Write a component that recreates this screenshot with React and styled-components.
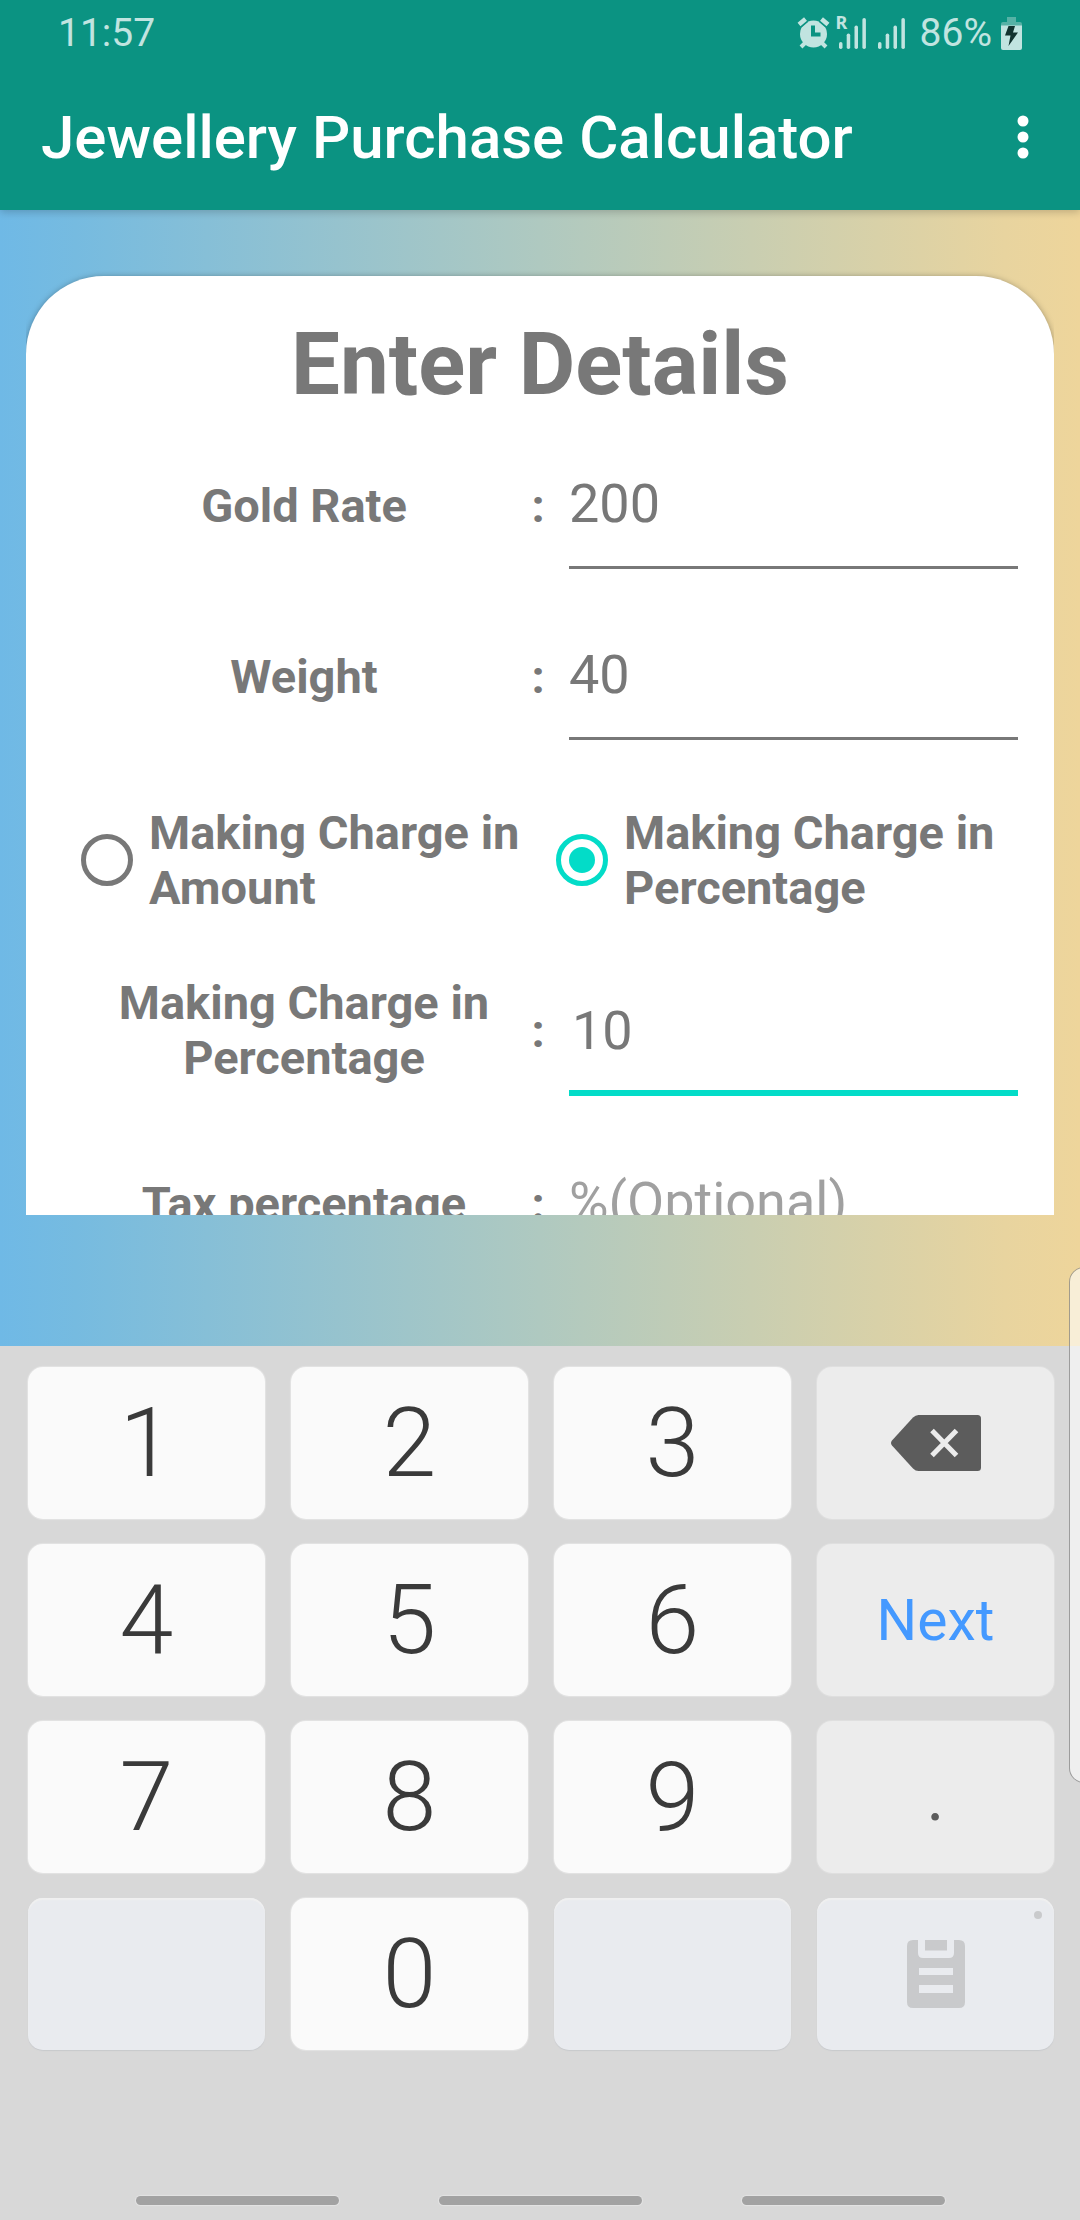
import React, { useState } from "react";
import styled, { createGlobalStyle, css } from "styled-components";

const ink = "#787878";
const teal = "#0b9382";
const accent = "#03dcc8";
const statusInk = "#c1e4e0";

const GlobalStyle = createGlobalStyle`
  *, *::before, *::after { box-sizing: border-box; }
  html, body { margin: 0; padding: 0; }
  body { font-family: Roboto, "Noto Sans", sans-serif; color: ${ink}; }
  button, input { font-family: inherit; margin: 0; }
`;

const Screen = styled.div`
  position: relative;
  display: flex;
  flex-direction: column;
  height: 100vh;
  overflow: hidden;
`;

const Header = styled.header`
  position: relative;
  z-index: 1;
  flex: none;
  background: ${teal};
  box-shadow: 0 2px 8px rgba(0, 0, 0, 0.2);
`;

const StatusBar = styled.div`
  display: flex;
  align-items: center;
  justify-content: space-between;
  height: 66px;
  padding: 0 58px;
  color: ${statusInk};
  font-size: 39px;
  line-height: 48px;
`;

const StatusGroup = styled.div`
  display: flex;
  align-items: center;
  gap: 9px;
`;

const Signals = styled.div`
  position: relative;
  display: flex;
  gap: 12px;
  margin-right: 6px;
`;

const Roaming = styled.span`
  position: absolute;
  left: -3px;
  top: -8px;
  font: 700 18px/24px "Noto Sans", sans-serif;
`;

const Toolbar = styled.div`
  display: flex;
  align-items: center;
  justify-content: space-between;
  height: 144px;
  padding: 0 41px;
`;

const AppTitle = styled.h1`
  margin: 0;
  color: #fff;
  font-size: 60px;
  font-weight: 500;
  line-height: 70px;
`;

const MenuButton = styled.button`
  display: flex;
  padding: 0;
  border: 0;
  background: none;
  color: #fff;
`;

const Main = styled.main`
  flex: 1;
  min-height: 0;
  display: flex;
  padding: 0 26px 131px;
  background: linear-gradient(90deg, #6fb9e6 0%, #76bbe0 7%, #afc9c0 50%, #e8d49f 93%, #eed59b 100%);
`;

const Scroller = styled.div`
  flex: 1;
  padding-top: 66px;
  overflow: hidden auto;
  scrollbar-width: none;
`;

const Card = styled.form`
  padding: 37px 0 60px;
  border-radius: 78px;
  background: #fff;
  box-shadow: 0 1px 6px rgba(0, 0, 0, 0.35);
`;

const Heading = styled.h2`
  margin: 0 0 22px;
  font-size: 87px;
  font-weight: 700;
  line-height: 102px;
  text-align: center;
`;

const Fields = styled.div`
  display: flex;
  flex-direction: column;
  gap: 39px;
`;

const FieldRow = styled.div`
  display: grid;
  grid-template-columns: 406fr 62px 449fr;
  align-items: ${(p) => (p.$wraps ? "center" : "baseline")};
  padding: 0 36px 0 75px;
`;

const labelText = css`
  font-size: 47px;
  font-weight: 700;
  line-height: 55px;
`;

const FieldLabel = styled.label`
  ${labelText}
  text-align: center;
`;

const Colon = styled.span`
  ${labelText}
  text-align: center;
`;

const FieldInput = styled.input`
  width: 100%;
  min-width: 0;
  height: 132px;
  padding: ${(p) => (p.$active ? "34px 3px 28px" : "34px 0 31px")};
  border: 0;
  border-bottom: ${(p) => (p.$active ? `6px solid ${accent}` : `3px solid ${ink}`)};
  border-radius: 0;
  outline: 0;
  background: none;
  color: ${ink};
  font-size: 54px;
  line-height: 64px;
  &::placeholder { color: #a0a0a0; opacity: 1; }
`;

const RadioRow = styled.div`
  display: grid;
  grid-template-columns: 1fr 1fr;
  padding: 26px 23px 10px 55px;
`;

const RadioLabel = styled.label`
  ${labelText}
  display: flex;
  align-items: center;
  gap: 16px;
`;

const Radio = styled.input`
  appearance: none;
  flex: none;
  display: grid;
  place-content: center;
  width: 52px;
  height: 52px;
  border: 5px solid ${ink};
  border-radius: 50%;
  &:checked { border-color: ${accent}; }
  &:checked::before {
    content: "";
    width: 26px;
    height: 26px;
    border-radius: 50%;
    background: ${accent};
  }
`;

const Keyboard = styled.section`
  flex: none;
  padding-top: 21px;
  background: #d8d8d8;
`;

const Keys = styled.div`
  display: grid;
  grid-template-columns: repeat(4, 1fr);
  grid-auto-rows: 152px;
  gap: 25px 26px;
  padding: 0 26px 0 28px;
`;

const keyTones = {
  digit: css`
    background: #fafafa;
    color: #3a3a3a;
    font-size: 97px;
    font-weight: 300;
    box-shadow: 0 0 1px 1px rgba(255, 255, 255, 0.3);
  `,
  action: css`
    background: #ececec;
    color: #5c5c5c;
    font-size: 68px;
    box-shadow: 0 0 1px 1px rgba(255, 255, 255, 0.2);
  `,
  next: css`
    background: #ececec;
    color: #4499ff;
    font-size: 57px;
    box-shadow: 0 0 1px 1px rgba(255, 255, 255, 0.2);
  `,
  muted: css`
    background: #e9ebef;
    color: #c9cacc;
    box-shadow: inset 0 2px 1px #f0f0f0, 0 1px 1px #c8cacd;
  `,
};

const Key = styled.button`
  position: relative;
  display: flex;
  align-items: center;
  justify-content: center;
  padding: 0;
  border: 0;
  border-radius: 15px;
  line-height: normal;
  font-weight: 400;
  ${(p) => keyTones[p.$tone]}
`;

const KeyDot = styled.span`
  position: absolute;
  top: 13px;
  right: 12px;
  width: 8px;
  height: 8px;
  border-radius: 50%;
  background: #c9cacc;
`;

const NavBar = styled.nav`
  display: flex;
  justify-content: center;
  gap: 100px;
  padding: 146px 0 15px;
`;

const NavHandle = styled.button`
  width: 203px;
  height: 9px;
  padding: 0;
  border: 0;
  border-radius: 5px;
  background: #a2a2a2;
  box-shadow: 0 0 1px 1px rgba(255, 255, 255, 0.3);
`;

const EdgePanel = styled.div`
  position: absolute;
  top: 1267px;
  right: -20px;
  width: 31px;
  height: 516px;
  border: 1px solid rgba(0, 0, 0, 0.35);
  border-radius: 15px;
  background: rgba(255, 255, 255, 0.6);
`;

const AlarmIcon = () => (
  <svg width="33" height="32" viewBox="0 0 33 32" fill="none" aria-hidden="true">
    <circle cx="16.500" cy="17" r="13.500" fill={statusInk} />
    <path d="M2 7.500 8.500 2M24.500 2 31 7.500" stroke={teal} strokeWidth="8" />
    <path d="M2 7.500 8.500 2M24.500 2 31 7.500" stroke={statusInk} strokeWidth="4.500" />
    <path d="M8 26l-4 4M25 26l4 4" stroke={statusInk} strokeWidth="4" />
    <path d="M16 8.500v9h7.500" stroke={teal} strokeWidth="4" />
  </svg>
);

const SignalIcon = () => (
  <svg width="27" height="31" viewBox="0 0 27 31" fill={statusInk} aria-hidden="true">
    <rect x="0" y="24" width="3.500" height="7" rx="1.700" />
    <rect x="7.700" y="15.500" width="3.500" height="15.500" rx="1.700" />
    <rect x="15.500" y="7.500" width="3.500" height="23.500" rx="1.700" />
    <rect x="23.400" y="0" width="3.500" height="31" rx="1.700" />
  </svg>
);

const BatteryIcon = () => (
  <svg width="21" height="33" viewBox="0 0 21 33" aria-hidden="true">
    <path d="M6 0h9v5h4q2 0 2 2v2H0V7q0-2 2-2h4z" fill="#56b2a6" />
    <path d="M0 8.500h21V31q0 2-2 2H2q-2 0-2-2z" fill={statusInk} />
    <path d="M7.500 9h6.500l-2 6.500h5L7.500 29l2-10.500H4z" fill="#12332f" />
  </svg>
);

const MoreIcon = () => (
  <svg width="32" height="48" viewBox="0 0 32 48" fill="currentColor" aria-hidden="true">
    <circle cx="16" cy="7" r="5.500" />
    <circle cx="16" cy="23" r="5.500" />
    <circle cx="16" cy="39" r="5.500" />
  </svg>
);

const BackspaceIcon = () => (
  <svg width="90" height="56" viewBox="0 0 90 56" aria-hidden="true">
    <path
      d="M27.500 0H86.500Q90 0 90 3.500V52.500Q90 56 86.500 56H27.500Q24.500 56 22 53.500L1 30.500Q-1 28 1 25.500L22 2.500Q24.500 0 27.500 0Z"
      fill="#5c5c5c"
    />
    <path d="M41 15.500 65.500 40.500M65.500 15.500 41 40.500" stroke="#ececec" strokeWidth="5" />
  </svg>
);

const ClipboardIcon = () => (
  <svg width="58" height="68" viewBox="0 0 58 68" fill="currentColor" aria-hidden="true">
    <path
      fillRule="evenodd"
      d="M6 0H11V13Q11 18 16 18H42Q47 18 47 13V0H52Q58 0 58 6V62Q58 68 52 68H6Q0 68 0 62V6Q0 0 6 0ZM12 28V35H46V28ZM12 45V53H46V45Z"
    />
    <rect x="18" y="0" width="22" height="10.500" />
  </svg>
);

const keys = [
  { text: "1", tone: "digit" },
  { text: "2", tone: "digit" },
  { text: "3", tone: "digit" },
  { label: "Backspace", tone: "action", icon: <BackspaceIcon /> },
  { text: "4", tone: "digit" },
  { text: "5", tone: "digit" },
  { text: "6", tone: "digit" },
  { text: "Next", tone: "next" },
  { text: "7", tone: "digit" },
  { text: "8", tone: "digit" },
  { text: "9", tone: "digit" },
  { text: ".", tone: "action" },
  { label: "Unused left", tone: "muted", disabled: true },
  { text: "0", tone: "digit" },
  { label: "Unused right", tone: "muted", disabled: true },
  { label: "Clipboard", tone: "muted", icon: <ClipboardIcon />, dot: true },
];

function Field({ id, label, wraps, active, ...input }) {
  return (
    <FieldRow $wraps={wraps}>
      <FieldLabel htmlFor={id}>{label}</FieldLabel>
      <Colon>:</Colon>
      <FieldInput id={id} type="text" inputMode="decimal" $active={active} {...input} />
    </FieldRow>
  );
}

export default function App() {
  const [mode, setMode] = useState("Percentage");
  return (
    <Screen>
      <GlobalStyle />
      <Header>
        <StatusBar>
          <span>11:57</span>
          <StatusGroup>
            <AlarmIcon />
            <Signals>
              <Roaming>R</Roaming>
              <SignalIcon />
              <SignalIcon />
            </Signals>
            <span>86%</span>
            <BatteryIcon />
          </StatusGroup>
        </StatusBar>
        <Toolbar>
          <AppTitle>Jewellery Purchase Calculator</AppTitle>
          <MenuButton type="button" aria-label="More options">
            <MoreIcon />
          </MenuButton>
        </Toolbar>
      </Header>
      <Main>
        <Scroller>
          <Card>
            <Heading>Enter Details</Heading>
            <Fields>
              <Field id="rate" label="Gold Rate" defaultValue="200" />
              <Field id="weight" label="Weight" defaultValue="40" />
              <RadioRow role="radiogroup" aria-label="Making charge type">
                {["Amount", "Percentage"].map((m) => (
                  <RadioLabel key={m}>
                    <Radio type="radio" name="charge" checked={mode === m} onChange={() => setMode(m)} />
                    <span>Making Charge in {m}</span>
                  </RadioLabel>
                ))}
              </RadioRow>
              <Field id="charge" label={`Making Charge in ${mode}`} defaultValue="10" wraps active />
              <Field id="tax" label="Tax percentage" placeholder="%(Optional)" />
            </Fields>
          </Card>
        </Scroller>
      </Main>
      <Keyboard aria-label="Number pad">
        <Keys>
          {keys.map((k) => (
            <Key key={k.text || k.label} type="button" $tone={k.tone} aria-label={k.label} disabled={k.disabled}>
              {k.text || k.icon}
              {k.dot && <KeyDot />}
            </Key>
          ))}
        </Keys>
        <NavBar aria-label="System navigation">
          <NavHandle type="button" aria-label="Recents" />
          <NavHandle type="button" aria-label="Home" />
          <NavHandle type="button" aria-label="Back" />
        </NavBar>
      </Keyboard>
      <EdgePanel />
    </Screen>
  );
}
